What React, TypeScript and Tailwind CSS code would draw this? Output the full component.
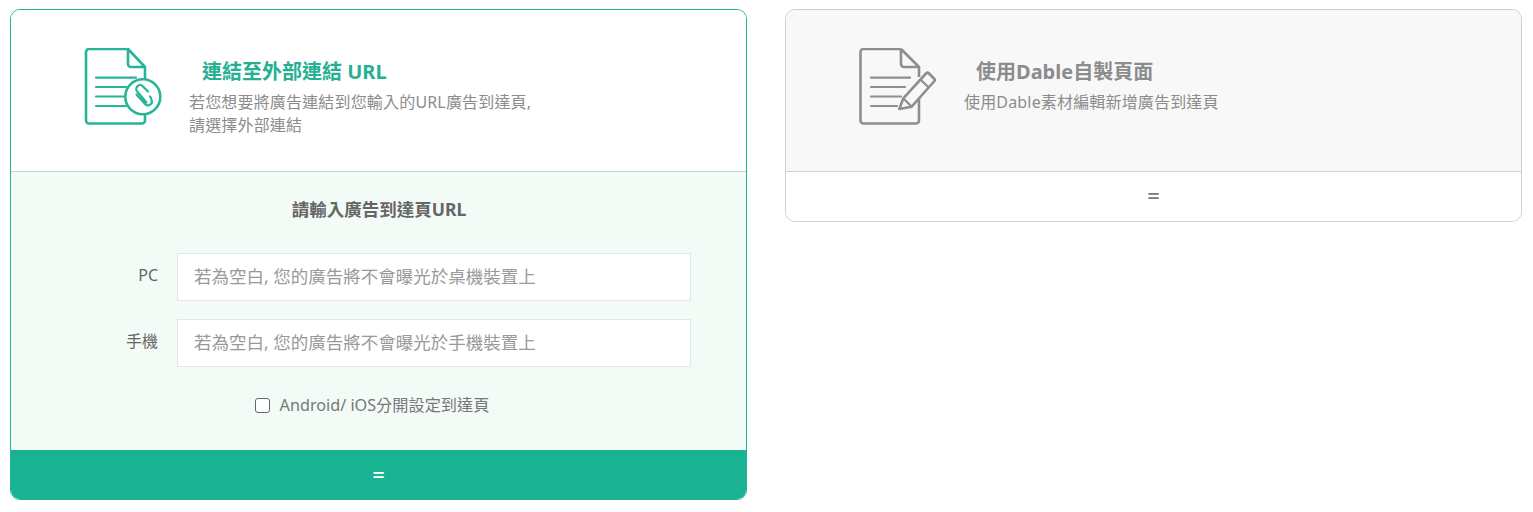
const font = { fontFamily: '"Noto Sans", "Noto Sans CJK TC", sans-serif' };

function Lines({ c, x2s }: { c: string; x2s: number[] }) {
  return (
    <g stroke={c} strokeWidth="2.2" strokeLinecap="round" fill="none">
      {[29.7, 39, 48.5, 58].map((y, i) => (
        <line key={y} x1="12" y1={y} x2={x2s[i]} y2={y} />
      ))}
    </g>
  );
}

function LinkDoc() {
  const c = "#25b597";
  return (
    <svg width="80" height="80" viewBox="0 0 80 80" fill="none" className="shrink-0">
      <path d="M5 1h39l17 18v14M61 62v10.500a3 3 0 0 1-3 3H5a3 3 0 0 1-3-3V4a3 3 0 0 1 3-3" stroke={c} strokeWidth="2.6" strokeLinejoin="round" fill="none" />
      <path d="M44 1v15a3 3 0 0 0 3 3h14" stroke={c} strokeWidth="2.6" fill="none" />
      <Lines c={c} x2s={[52, 42, 42, 42]} />
      <circle cx="58.8" cy="48.700" r="17.500" stroke={c} strokeWidth="2.6" fill="#fff" />
      <path d="M64 43.500L59 38.500a3.800 3.800 0 0 0-5.800 5L62.500 54.500M66 48.500a3.800 3.800 0 0 1 1.300 3a3.800 3.800 0 0 1-1 5a3.800 3.800 0 0 1-4.800 0L52.500 46.500" stroke={c} strokeWidth="2.2" strokeLinecap="round" fill="none" />
    </svg>
  );
}

function PenDoc() {
  const c = "#8e8e8e";
  return (
    <svg width="80" height="80" viewBox="0 0 80 80" fill="none" className="shrink-0">
      <path d="M42 1H4.500a3 3 0 0 0-3 3v68.500a3 3 0 0 0 3 3H57a3 3 0 0 0 3-3V45M60 29V19L42 1" stroke={c} strokeWidth="2.6" strokeLinejoin="round" fill="none" />
      <path d="M42 1v15a3 3 0 0 0 3 3h15" stroke={c} strokeWidth="2.6" fill="none" />
      <Lines c={c} x2s={[51, 46, 42, 38]} />
      <path d="M40.300 61L44.300 50.300L67 25.500q1.500-1.500 3 0L75 30.500q1.500 1.500 0 3L52.700 58.700Z" stroke={c} strokeWidth="2.6" strokeLinejoin="round" fill="#f8f8f8" />
      <path d="M62 32L69.500 39.300M44.300 50.300L52.700 58.700" stroke={c} strokeWidth="2.2" />
    </svg>
  );
}

function Row({ label, ph }: { label: string; ph: string }) {
  return (
    <div className="flex items-center h-[48px]">
      <label className="w-[148px] pr-[19px] pb-[4px] text-right text-[16px] text-[#666]">{label}</label>
      <input
        readOnly
        placeholder={ph}
        className="w-[514px] h-[48px] bg-white border border-[#e6e6e6] px-4 pb-[2px] text-[17.5px] text-[#666] placeholder:text-[#999] outline-none"
      />
    </div>
  );
}

export default function App() {
  return (
    <div style={font} className="w-[1533px] h-[512px] bg-white pt-[9px] pl-[10px] pr-[11px] flex items-start justify-between overflow-hidden">
      <div className="w-[737px] h-[491px] rounded-[10px] border border-[#1fb594] overflow-hidden flex flex-col">
        <div className="h-[162px] shrink-0 bg-white border-b border-[#c9d6d3] flex pl-[73px] pt-[38px]">
          <LinkDoc />
          <div className="ml-[25px] pt-[10px]">
            <div className="ml-[13px] text-[20px] leading-[28px] font-bold text-[#25b094]">連結至外部連結 URL</div>
            <p className="mt-[5px] text-[16px] leading-[23px] tracking-[0.17px] text-[#8c8c8c]">
              若您想要將廣告連結到您輸入的URL廣告到達頁,<br />請選擇外部連結
            </p>
          </div>
        </div>
        <div className="flex-1 bg-[#f3fbf7] flex flex-col">
          <div className="pt-[25px] pl-[1px] text-center text-[17.5px] leading-[24px] font-bold text-[#666]">請輸入廣告到達頁URL</div>
          <div className="mt-[32px] ml-[18px] flex flex-col gap-[18px]">
            <Row label="PC" ph="若為空白, 您的廣告將不會曝光於桌機裝置上" />
            <Row label="手機" ph="若為空白, 您的廣告將不會曝光於手機裝置上" />
          </div>
          <div className="mt-[26px] flex items-center justify-center gap-[10px] pr-[13px] h-[24px] text-[16.2px] text-[#777]">
            <span className="w-[15px] h-[15px] rounded-[3px] border-[1.5px] border-[#666] bg-white" />
            <span>Android/ iOS分開設定到達頁</span>
          </div>
        </div>
        <div className="h-[49px] shrink-0 bg-[#19b394] flex items-center justify-center text-white text-[22px] font-medium">=</div>
      </div>
      <div className="w-[737px] h-[213px] rounded-[10px] border border-[#cfcfcf] overflow-hidden flex flex-col">
        <div className="h-[162px] shrink-0 bg-[#f8f8f8] border-b border-[#cfcfcf] flex pl-[73px] pt-[38px]">
          <PenDoc />
          <div className="ml-[25px] pt-[10px]">
            <div className="ml-[12px] text-[20px] leading-[28px] font-bold text-[#8c8c8c]">使用Dable自製頁面</div>
            <p className="mt-[5px] text-[16px] leading-[23px] tracking-[0.17px] text-[#8c8c8c]">使用Dable素材編輯新增廣告到達頁</p>
          </div>
        </div>
        <div className="flex-1 bg-white pb-[3px] flex items-center justify-center text-[#777] text-[22px] font-medium">=</div>
      </div>
    </div>
  );
}
